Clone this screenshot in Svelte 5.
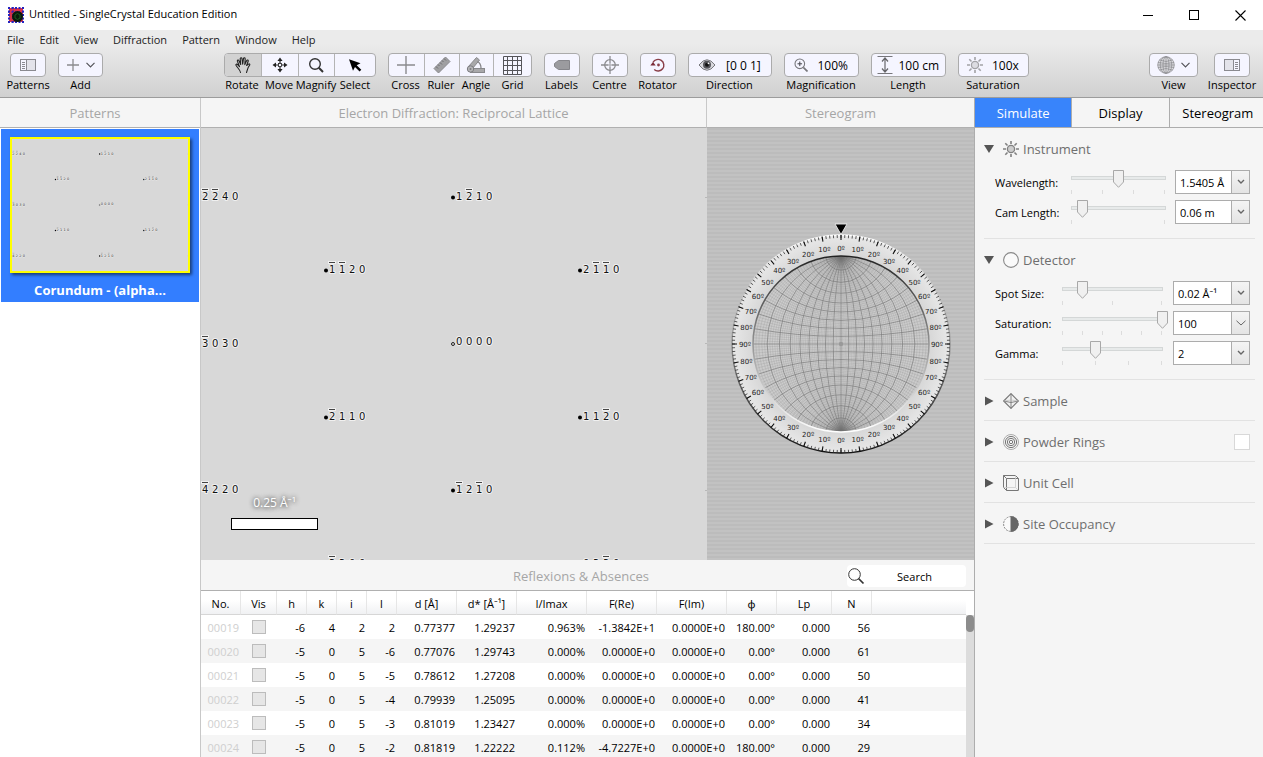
<script>
  const menus = ['File', 'Edit', 'View', 'Diffraction', 'Pattern', 'Window', 'Help'];

  const leftTools = [
    { cells: [{ icon: 'sidebar', label: 'Patterns', w: 36 }] },
    { cells: [{ icon: 'add', label: 'Add', w: 45, menu: true }] }
  ];
  const midTools = [
    {
      cells: [
        { icon: 'hand', label: 'Rotate', w: 37, on: true },
        { icon: 'move', label: 'Move', w: 37 },
        { icon: 'magnify', label: 'Magnify', w: 37 },
        { icon: 'select', label: 'Select', w: 41 }
      ]
    },
    {
      cells: [
        { icon: 'cross', label: 'Cross', w: 36 },
        { icon: 'ruler', label: 'Ruler', w: 35 },
        { icon: 'angle', label: 'Angle', w: 35 },
        { icon: 'grid', label: 'Grid', w: 38 }
      ]
    },
    { cells: [{ icon: 'labels', label: 'Labels', w: 36 }] },
    { cells: [{ icon: 'centre', label: 'Centre', w: 36 }] },
    { cells: [{ icon: 'rotator', label: 'Rotator', w: 36 }] },
    { cells: [{ icon: 'eye', label: 'Direction', w: 84, value: '[0 0 1]' }] },
    { cells: [{ icon: 'zoomin', label: 'Magnification', w: 75, value: '100%' }] },
    { cells: [{ icon: 'length', label: 'Length', w: 75, value: '100 cm' }] },
    { cells: [{ icon: 'sun', label: 'Saturation', w: 71, value: '100x' }] }
  ];
  const rightTools = [
    { cells: [{ icon: 'globe', label: 'View', w: 49, menu: true }] },
    { cells: [{ icon: 'inspector', label: 'Inspector', w: 36 }] }
  ];

  // Reflexions: spot position, text baseline and the four indices.
  const spots = [
    { x: -2, y: 69, b: 72, hkl: [-2, -2, 4, 0], edge: true },
    { x: 252, y: 69, b: 72, hkl: [1, -2, 1, 0] },
    { x: 125, y: 142, b: 145, hkl: [-1, -1, 2, 0] },
    { x: 379, y: 142, b: 145, hkl: [2, -1, -1, 0] },
    { x: -2, y: 216, b: 219, hkl: [-3, 0, 3, 0], edge: true },
    { x: 252, y: 216, b: 217, hkl: [0, 0, 0, 0], open: true },
    { x: 125, y: 289, b: 292, hkl: [-2, 1, 1, 0] },
    { x: 379, y: 289, b: 292, hkl: [1, 1, -2, 0] },
    { x: -2, y: 362, b: 365, hkl: [-4, 2, 2, 0], edge: true },
    { x: 252, y: 362, b: 365, hkl: [-1, 2, -1, 0] },
    { x: 125, y: 436, b: 439, hkl: [-3, 3, 0, 0] },
    { x: 379, y: 436, b: 439, hkl: [0, 3, -3, 0] }
  ];
  const miniSpots = spots.filter((s) => s.y < 400);

  // Wulff net geometry.
  const R = 88;
  const RO = 109;
  const rad = (d) => (d * Math.PI) / 180;
  const f = (n) => n.toFixed(2);
  function net(step, skip) {
    let d = '';
    for (let a = step; a < 90; a += step) {
      if (skip && a % skip === 0) continue;
      const g = f(R / Math.sin(rad(a)));
      d += `M0 ${-R}A${g} ${g} 0 0 1 0 ${R}M0 ${-R}A${g} ${g} 0 0 0 0 ${R}`;
      const r = f(R / Math.tan(rad(a)));
      const x = f(R * Math.cos(rad(a)));
      const y = R * Math.sin(rad(a));
      d += `M-${x} ${f(-y)}A${r} ${r} 0 0 0 ${x} ${f(-y)}M-${x} ${f(y)}A${r} ${r} 0 0 1 ${x} ${f(y)}`;
    }
    return d;
  }
  function ticks(step, len) {
    let d = '';
    for (let a = 0; a < 360; a += step) {
      const c = Math.cos(rad(a));
      const s = Math.sin(rad(a));
      d += `M${f(RO * c)} ${f(RO * s)}L${f((RO - len) * c)} ${f((RO - len) * s)}`;
    }
    return d;
  }
  const fineNet = net(2, 10);
  const coarseNet = net(10, 0) + `M0 ${-R}V${R}M${-R} 0H${R}`;
  const minorTicks = ticks(2, 3);
  const majorTicks = ticks(10, 5);
  const degrees = Array.from({ length: 36 }, (_, i) => {
    const a = i * 10;
    const m = a % 180;
    return { x: 96 * Math.sin(rad(a)), y: -96 * Math.cos(rad(a)) + 3, t: (m > 90 ? 180 - m : m) + 'º' };
  });

  const columns = [
    ['No.', 40], ['Vis', 36], ['h', 30], ['k', 30], ['i', 30], ['l', 30], ['d [Å]', 60], ['d* [Å⁻¹]', 60],
    ['I/Imax', 70], ['F(Re)', 70], ['F(Im)', 70], ['ϕ', 50], ['Lp', 55], ['N', 40]
  ];
  const rows = [
    ['00019', -6, 4, 2, 2, '0.77377', '1.29237', '0.963%', '-1.3842E+1', '0.0000E+0', '180.00°', '0.000', 56],
    ['00020', -5, 0, 5, -6, '0.77076', '1.29743', '0.000%', '0.0000E+0', '0.0000E+0', '0.00°', '0.000', 61],
    ['00021', -5, 0, 5, -5, '0.78612', '1.27208', '0.000%', '0.0000E+0', '0.0000E+0', '0.00°', '0.000', 50],
    ['00022', -5, 0, 5, -4, '0.79939', '1.25095', '0.000%', '0.0000E+0', '0.0000E+0', '0.00°', '0.000', 41],
    ['00023', -5, 0, 5, -3, '0.81019', '1.23427', '0.000%', '0.0000E+0', '0.0000E+0', '0.00°', '0.000', 34],
    ['00024', -5, 0, 5, -2, '0.81819', '1.22222', '0.112%', '-4.7227E+0', '0.0000E+0', '180.00°', '0.000', 29]
  ];

  const sections = [
    {
      icon: 'instrument', title: 'Instrument', kind: 'instrument',
      rows: [
        { id: 'wavelength', label: 'Wavelength:', pos: 50, ticks: 4, value: '1.5405 Å' },
        { id: 'camlength', label: 'Cam Length:', pos: 12, ticks: 2, value: '0.06 m' }
      ]
    },
    {
      icon: 'detector', title: 'Detector', kind: 'detector',
      rows: [
        { id: 'spotsize', label: 'Spot Size:', pos: 20, ticks: 3, value: '0.02 Å⁻¹' },
        { id: 'saturation', label: 'Saturation:', pos: 100, ticks: 6, value: '100', wide: true },
        { id: 'gamma', label: 'Gamma:', pos: 33, ticks: 4, value: '2' }
      ]
    },
    { icon: 'sample', title: 'Sample' },
    { icon: 'rings', title: 'Powder Rings', check: true },
    { icon: 'cell', title: 'Unit Cell' },
    { icon: 'occupancy', title: 'Site Occupancy' }
  ];
  const tabs = ['Simulate', 'Display', 'Stereogram'];
  let tab = $state('Simulate');
</script>

{#snippet icon(name)}
  {#if name === 'sidebar' || name === 'inspector'}
    <svg width="18" height="14" viewBox="0 0 18 14" class:flip={name === 'inspector'}>
      <rect x="1.5" y="1.5" width="15" height="11" fill="none" stroke="#8a8a90" />
      <path d="M7.500 1.500V12.500" stroke="#8a8a90" />
      <path d="M3 4.500H6M3 6.500H6M3 8.500H6M3 10.500H6" stroke="#8a8a90" />
      <rect x="8" y="2" width="8" height="10" fill="#e3e3ea" />
    </svg>
  {:else if name === 'add'}
    <svg width="14" height="14" viewBox="0 0 14 14"><path d="M7 1V13M1 7H13" stroke="#8a8a8e" stroke-width="1.300" /></svg>
  {:else if name === 'hand'}
    <svg width="18" height="18" viewBox="0 0 18 18" fill="none" stroke="#222" stroke-width="1.100" stroke-linecap="round" stroke-linejoin="round">
      <path d="M6.500 16.500C6 13.500 3.500 12 2 9.300C1.500 8.200 2.800 7.700 3.600 8.600L5.500 10.600L3.400 5.200C3 3.900 4.500 3.500 5 4.700L6.700 8.500L6.200 2.800C6.200 1.500 7.800 1.400 8 2.700L8.700 8.200L9.500 2.500C9.800 1.300 11.300 1.500 11.200 2.900L10.800 8.600L12.700 4.600C13.300 3.500 14.600 4.100 14.200 5.300L12.600 9.500L14.500 8.100C15.500 7.500 16.300 8.500 15.500 9.300C13.800 11 13.500 13.500 12.500 16.500" />
    </svg>
  {:else if name === 'move'}
    <svg width="16" height="16" viewBox="0 0 16 16">
      <path d="M8 2V14M2 8H14" stroke="#222" stroke-width="1.200" />
      <path d="M8 .5L10.600 4H5.400ZM8 15.500L5.400 12H10.600ZM.5 8L4 5.400V10.600ZM15.500 8L12 10.600V5.400Z" fill="#222" />
      <rect x="6.500" y="6.500" width="3" height="3" fill="#f5f5ff" stroke="#222" stroke-width=".8" />
    </svg>
  {:else if name === 'magnify'}
    <svg width="16" height="16" viewBox="0 0 16 16" fill="none" stroke="#333"><circle cx="7" cy="7" r="5.300" stroke-width="1.400" /><path d="M10.800 10.800L15 15" stroke-width="2" /></svg>
  {:else if name === 'select'}
    <svg width="16" height="16" viewBox="0 0 16 16"><path d="M2 2.300L13.500 6.300L9.700 8.200L14.300 12.800L12.600 14.500L8 9.900L6 13.700Z" fill="#000" /></svg>
  {:else if name === 'cross'}
    <svg width="20" height="20" viewBox="0 0 20 20"><path d="M10 1V19M1 10H19" stroke="#8a8a8e" stroke-width="1.400" /></svg>
  {:else if name === 'ruler'}
    <svg width="18" height="18" viewBox="0 0 18 18">
      <path d="M12.500 1L17 5.500L5.500 17L1 12.500Z" fill="#a0a0a2" stroke="#88888c" />
      <path d="M3 10.500L5 12.500M5 8.500L6.500 10M7 6.500L9 8.500M9 4.500L10.500 6M11 2.500L13 4.500" stroke="#66666a" stroke-width=".9" />
    </svg>
  {:else if name === 'angle'}
    <svg width="20" height="18" viewBox="0 0 20 18">
      <path d="M2.500 10.500L10.500 1.500L13.500 4L6.500 12.500Z" fill="#a8a8aa" stroke="#88888c" />
      <path d="M11.500 5.500Q15 7.500 15 12" fill="none" stroke="#88888c" stroke-width="1.300" />
      <rect x="4.500" y="12.500" width="14" height="4" fill="#a8a8aa" stroke="#88888c" />
      <circle cx="4.500" cy="13" r="3.200" fill="#b4b4b6" stroke="#7c7c80" /><circle cx="4.500" cy="13" r="1" fill="#7c7c80" />
    </svg>
  {:else if name === 'grid'}
    <svg width="19" height="19" viewBox="0 0 19 19" fill="none" stroke="#55555a"><path d="M.5 .5H18.500V18.500H.5ZM4.500 0V19M9.500 0V19M14.500 0V19M0 4.500H19M0 9.500H19M0 14.500H19" /></svg>
  {:else if name === 'labels'}
    <svg width="18" height="12" viewBox="0 0 18 12"><path d="M5.500 1.500H16.500V10.500H5.500L1.500 7.500V4.500Z" fill="#9b9b9f" stroke="#85858a" stroke-linejoin="round" /></svg>
  {:else if name === 'centre'}
    <svg width="18" height="18" viewBox="0 0 18 18" fill="none" stroke="#8c8c90" stroke-width="1.300"><circle cx="9" cy="9" r="5.300" /><path d="M9 0V7.500M9 10.500V18M0 9H7.500M10.500 9H18" /><circle cx="9" cy="9" r="1" stroke-width=".7" /></svg>
  {:else if name === 'rotator'}
    <svg width="16" height="16" viewBox="0 0 16 16"><path d="M3.800 4.200A5.800 5.800 0 1 1 3.200 11.500" fill="none" stroke="#8a3f48" stroke-width="1.400" transform="rotate(-14 8 8)" /><path d="M.3 8.500H5.700L3 5Z" fill="#7a2c38" /><circle cx="8.500" cy="8" r="1.400" fill="#8a3f48" /></svg>
  {:else if name === 'eye'}
    <svg width="18" height="14" viewBox="0 0 18 14"><path d="M1 7Q9 -3.500 17 7Q9 17.500 1 7Z" fill="#d9d9de" stroke="#77777c" /><circle cx="9" cy="6.800" r="4" fill="#55555a" /><circle cx="9" cy="6.800" r="2" fill="#111" /><circle cx="10.500" cy="5.300" r=".9" fill="#fff" /></svg>
  {:else if name === 'zoomin'}
    <svg width="14" height="14" viewBox="0 0 14 14" fill="none" stroke="#77777c"><circle cx="5.800" cy="5.800" r="4.800" stroke-width="1.100" /><path d="M3.500 5.800H8.100M5.800 3.500V8.100" stroke="#44444a" /><path d="M9.300 9.300L13.500 13.500" stroke-width="1.700" /></svg>
  {:else if name === 'length'}
    <svg width="16" height="18" viewBox="0 0 16 18"><path d="M.5 .5H15.500M.5 17.500H15.500" stroke="#77777c" /><path d="M8 3V15M5 5.500L8 2L11 5.500M5 12.500L8 16L11 12.500" fill="none" stroke="#66666a" stroke-width="1.200" /></svg>
  {:else if name === 'sun' || name === 'instrument'}
    <svg width="16" height="16" viewBox="0 0 16 16" stroke={name === 'sun' ? '#a2a2a6' : '#808080'}>
      <circle cx="8" cy="8" r="3.600" fill={name === 'sun' ? '#dcdce2' : '#ccc'} stroke-width="1.300" />
      <path d="M8 0V3M8 13V16M0 8H3M13 8H16M2.300 2.300L4.500 4.500M11.500 11.500L13.700 13.700M2.300 13.700L4.500 11.500M11.500 4.500L13.700 2.300" stroke-width="1.600" />
    </svg>
  {:else if name === 'globe'}
    <svg width="18" height="18" viewBox="0 0 18 18" fill="none" stroke="#8a8a8e" stroke-width=".7"><circle cx="9" cy="9" r="8.300" fill="#dcdce0" /><path d="M9 .7V17.300M.7 9H17.300" /><ellipse cx="9" cy="9" rx="3" ry="8.300" /><ellipse cx="9" cy="9" rx="5.800" ry="8.300" /><path d="M2.500 4Q9 7 15.500 4M2.500 14Q9 11 15.500 14M1 6.500Q9 8.500 17 6.500M1 11.500Q9 9.500 17 11.500" /></svg>
  {:else if name === 'detector'}
    <svg width="16" height="16" viewBox="0 0 16 16"><circle cx="8" cy="8" r="7.400" fill="#fafafa" stroke="#888" stroke-width="1.100" /></svg>
  {:else if name === 'sample'}
    <svg width="16" height="16" viewBox="0 0 16 16" fill="none" stroke="#777" stroke-linejoin="round"><path d="M8 .7L15.300 8L8 15.300L.7 8Z" fill="#f2f2f2" stroke-width="1.100" /><path d="M8 .7V15.300M.7 8L8 9.500L15.300 8" stroke-width=".9" /><path d="M.7 8L8 7L15.300 8" stroke="#bbb" stroke-width=".7" /></svg>
  {:else if name === 'rings'}
    <svg width="16" height="16" viewBox="0 0 16 16" fill="none" stroke="#777"><circle cx="8" cy="8" r="7.500" stroke="#aaa" /><circle cx="8" cy="8" r="5.600" /><circle cx="8" cy="8" r="3.700" /><circle cx="8" cy="8" r="1.700" /></svg>
  {:else if name === 'cell'}
    <svg width="16" height="16" viewBox="0 0 16 16" fill="none" stroke="#777"><path d="M.5 .5H12.500L15.500 3.500V15.500H3.500L.5 12.500ZM.5 .5L3.500 3.500M3.500 15.500V3.500H15.500" /><path d="M12.500 .5V12.500H.5M12.500 12.500L15.500 15.500" stroke="#ccc" stroke-width=".8" /></svg>
  {:else if name === 'occupancy'}
    <svg width="16" height="16" viewBox="0 0 16 16"><circle cx="8" cy="8" r="7.400" fill="#fafafa" stroke="#888" stroke-dasharray="2 1" /><path d="M7.500 0A8 8 0 0 1 7.500 16Z" fill="#666" /></svg>
  {/if}
{/snippet}

{#snippet tool(group)}
  <div class="tool" style="width:{group.cells.reduce((n, c) => n + c.w, 0)}px">
    <div class="box">
      {#each group.cells as c}
        <button class="cell" class:on={c.on} style="width:{c.w}px" aria-label={c.label}>
          {@render icon(c.icon)}
          {#if c.value}<span class="val">{c.value}</span>{/if}
          {#if c.menu}<svg width="9" height="6" viewBox="0 0 9 6"><path d="M.5 .8L4.500 4.800L8.500 .8" fill="none" stroke="#55555a" stroke-width="1.200" /></svg>{/if}
        </button>
      {/each}
    </div>
    <div class="caps">
      {#each group.cells as c}<span style="width:{c.w}px">{c.label}</span>{/each}
    </div>
  </div>
{/snippet}

{#snippet pattern(list)}
  {#each list as s}
    {#if s.open}
      <circle cx={s.x} cy={s.y} r="1.500" fill="#d8d8d8" stroke="#222" />
    {:else if !s.edge}
      <circle cx={s.x} cy={s.y + 0.5} r="2" fill="#000" />
    {/if}
    {#each s.hkl as n, i}
      <text class="idx" x={s.x + 3 + i * 10} y={s.b}>{Math.abs(n)}</text>
      {#if n < 0}
        <path d="M{s.x + 2 + i * 10} {s.b - 10.5}h8" stroke="#f0f0f0" stroke-width="3" />
        <path d="M{s.x + 3 + i * 10} {s.b - 10.5}h6" stroke="#444" />
      {/if}
    {/each}
  {/each}
  <path d="M504.500 69.500h1M504.500 215.500h1M504.500 362.500h1" stroke="#999" />
{/snippet}

<div class="window">
  <header class="title">
    <svg width="16" height="16" viewBox="0 0 16 16">
      <rect x="1" y="1" width="14" height="14" fill="#d8304a" />
      <path d="M0 1H16M0 15H16M1 0V16M15 0V16" stroke="#2424c0" stroke-width="2" stroke-dasharray="2 1.500" />
      <path d="M0 5H16M5 0V16" stroke="#2424c0" stroke-width="1.500" stroke-dasharray="1.500 2" />
      <circle cx="9.500" cy="9.500" r="5.500" fill="#0b1a0b" />
      <path d="M7 8l2.500-1.500L12 8v3l-2.500 1.500L7 11z" fill="none" stroke="#1d5a1d" />
    </svg>
    <span>Untitled - SingleCrystal Education Edition</span>
    <div class="wincontrols">
      <button aria-label="Minimize"><svg width="11" height="11"><path d="M0 5.500H10" stroke="#000" /></svg></button>
      <button aria-label="Maximize"><svg width="11" height="11"><rect x=".5" y=".5" width="9" height="9" fill="none" stroke="#000" /></svg></button>
      <button aria-label="Close"><svg width="11" height="11"><path d="M.5 .5L10.500 10.500M10.500 .5L.5 10.500" stroke="#000" stroke-width="1.100" /></svg></button>
    </div>
  </header>

  <div class="chrome">
    <nav class="menubar">{#each menus as m}<button>{m}</button>{/each}</nav>
    <div class="toolbar">
      <div class="cluster">{#each leftTools as g}{@render tool(g)}{/each}</div>
      <div class="cluster">{#each midTools as g}{@render tool(g)}{/each}</div>
      <div class="cluster right">{#each rightTools as g}{@render tool(g)}{/each}</div>
    </div>
  </div>

  <div class="body">
    <aside class="patterns">
      <h2>Patterns</h2>
      <button class="thumb">
        <svg class="mini" viewBox="0 0 506 432" preserveAspectRatio="xMidYMid slice">{@render pattern(miniSpots)}</svg>
        <span>Corundum - (alpha...</span>
      </button>
    </aside>

    <main>
      <div class="views">
        <section class="diffraction">
          <h2>Electron Diffraction: Reciprocal Lattice</h2>
          <div class="canvas">
            <svg class="plot">{@render pattern(spots)}</svg>
            <div class="scale"><span>0.25 Å⁻¹</span><i></i></div>
          </div>
        </section>
        <section class="stereo">
          <h2>Stereogram</h2>
          <div class="canvas stripes">
            <svg width="224" height="236" viewBox="-112 -122 224 236">
              <defs>
                <linearGradient id="rim" x1="0" y1="0" x2="0" y2="1"><stop offset="0" stop-color="#fff" /><stop offset=".4" stop-color="#aaa" /><stop offset="1" stop-color="#111" /></linearGradient>
                <linearGradient id="lip" x1="0" y1="0" x2="0" y2="1"><stop offset="0" stop-color="#222" /><stop offset=".6" stop-color="#aaa" /><stop offset="1" stop-color="#fff" /></linearGradient>
                <radialGradient id="ring"><stop offset=".8" stop-color="#d6d6d6" /><stop offset="1" stop-color="#e8e8e8" /></radialGradient>
                <radialGradient id="disc"><stop offset="0" stop-color="#d6d6d6" /><stop offset="1" stop-color="#cacaca" /></radialGradient>
                <radialGradient id="pole"><stop offset="0" stop-color="#666" stop-opacity=".6" /><stop offset="1" stop-color="#888" stop-opacity="0" /></radialGradient>
                <clipPath id="inside"><circle r={R} /></clipPath>
              </defs>
              <circle r={RO} fill="url(#ring)" stroke="url(#rim)" stroke-width="1.400" />
              <path d={minorTicks} stroke="#333" stroke-width=".8" />
              <path d={majorTicks} stroke="#111" stroke-width="1.100" />
              <circle r={R} fill="url(#disc)" />
              <g clip-path="url(#inside)" fill="none">
                <path d={fineNet} stroke="#777" stroke-opacity=".32" stroke-width=".5" />
                <path d={coarseNet} stroke="#777" stroke-opacity=".75" stroke-width=".9" />
                <circle cy={-R} r="15" fill="url(#pole)" />
                <circle cy={R} r="15" fill="url(#pole)" />
              </g>
              <circle r={R} fill="none" stroke="url(#lip)" stroke-width="1.500" />
              <circle r="2.200" fill="#999" />
              {#each degrees as d}<text class="deg" x={d.x} y={d.y}>{d.t}</text>{/each}
              <path d="M-6 -120H6L0 -109.500Z" fill="#000" stroke="#eee" stroke-width=".9" />
            </svg>
          </div>
        </section>
      </div>

      <section class="reflexions">
        <div class="refhead">
          <h3>Reflexions &amp; Absences</h3>
          <label class="search">
            <svg width="18" height="18" viewBox="0 0 18 18" fill="none" stroke="#333"><circle cx="7.500" cy="7.500" r="5.800" /><path d="M11.500 11.500L16.500 16.500" stroke-width="1.700" /></svg>
            <input type="text" placeholder="Search" aria-label="Search" />
          </label>
        </div>
        <div class="tablewrap">
          <table>
            <colgroup>{#each columns as c}<col style="width:{c[1]}px" />{/each}<col /></colgroup>
            <thead><tr>{#each columns as c}<th>{c[0]}</th>{/each}<th class="rest"></th></tr></thead>
            <tbody>
              {#each rows as r}
                <tr>
                  <td class="no">{r[0]}</td>
                  <td class="vis"><input type="checkbox" aria-label="Visible {r[0]}" /></td>
                  {#each r.slice(1) as v}<td>{v}</td>{/each}
                  <td></td>
                </tr>
              {/each}
            </tbody>
          </table>
          <div class="scrollbar"><i></i></div>
        </div>
      </section>
    </main>

    <aside class="inspector">
      <div class="tabs">
        {#each tabs as t}<button class:active={tab === t} onclick={() => (tab = t)}>{t}</button>{/each}
      </div>
      {#each sections as s}
        <section class="group" class:open={s.rows}>
          <header>
            <svg class="tri" width="10" height="10" viewBox="0 0 10 10"><path d={s.rows ? 'M0 1H10L5 9Z' : 'M1 .5L9.500 5L1 9.500Z'} fill="#555" /></svg>
            {@render icon(s.icon)}
            <h4>{s.title}</h4>
            {#if s.check}<input type="checkbox" aria-label={s.title} />{/if}
          </header>
          {#if s.rows}
            {#each s.rows as r}
              <div class="row {s.kind}">
                <label for={r.id}>{r.label}</label>
                <div class="slider">
                  <input id={r.id} type="range" min="0" max="100" value={r.pos} />
                  <div class="marks">{#each Array(r.ticks) as _}<i></i>{/each}</div>
                </div>
                <div class="combo">
                  <select aria-label="{r.label} value"><option>{r.value}</option></select>
                  <svg width="10" height="6" viewBox="0 0 10 6"><path d={r.wide ? 'M.5 .8L5 5L9.500 .8' : 'M2 1L5 4L8 1'} fill="none" stroke="#666" stroke-width={r.wide ? 1 : 1.4} /></svg>
                </div>
              </div>
            {/each}
          {/if}
        </section>
      {/each}
    </aside>
  </div>
</div>

<style>
  :global(body) {
    margin: 0;
    overflow: hidden;
    font-family: "Open Sans", "Noto Sans", sans-serif;
    font-size: 11px;
    color: #000;
  }
  button, input, select { font: inherit; color: inherit; }
  button { border: 0; padding: 0; background: none; }
  svg { display: block; flex: none; }
  .flip { transform: scaleX(-1); }
  h2, h3, h4 { margin: 0; font-weight: 400; font-size: 13px; }

  .window { display: flex; flex-direction: column; height: 100vh; background: #f5f5f5; }
  .title { display: flex; align-items: center; height: 30px; flex: none; padding-left: 8px; gap: 5px; background: #fff; }
  .title > span { line-height: 16px; padding-bottom: 2px; }
  .wincontrols { display: flex; margin-left: auto; }
  .wincontrols button { width: 46px; height: 28px; display: grid; place-items: center; }

  .chrome { flex: none; height: 67px; background: linear-gradient(#ebebeb 20%, #d0d0d0); border-bottom: 1px solid #9c9c9c; }
  .menubar { display: flex; height: 20px; box-sizing: border-box; padding: 0 0 2px 7px; gap: 15px; color: #222; }
  .toolbar { display: flex; justify-content: space-between; padding: 3px 13px 0 10px; }
  .cluster { display: flex; gap: 12px; }
  .cluster.right { gap: 16px; }
  .box { display: flex; height: 24px; box-sizing: border-box; border: 1px solid #ababab; border-radius: 4px; background: #f5f5ff; overflow: hidden; }
  .cell { display: flex; align-items: center; justify-content: space-evenly; box-sizing: border-box; flex: 0 1 auto; min-width: 0; }
  .cell + .cell { border-left: 1px solid #b4b4b4; }
  .cell.on { background: #d2d2d2; }
  .val { font-size: 12px; }
  .tool { display: flex; flex-direction: column; }
  .caps { display: flex; line-height: 16px; }
  .caps span { display: flex; justify-content: center; white-space: nowrap; }

  .body { display: grid; grid-template-columns: 200px minmax(0, 1fr) 289px; flex: 1; min-height: 0; }
  h2 { height: 29px; line-height: 30px; text-align: center; color: #a6a6a6; border-bottom: 1px solid #b0b0b0; }
  .patterns h2 { padding-right: 10px; }
  .patterns { background: #fff; }
  .patterns h2 { background: #f5f5f5; }
  .thumb { display: flex; flex-direction: column; align-items: center; width: 198px; height: 173px; margin: 1px; padding-top: 8px; background: #337eff; color: #fff; font-weight: 700; font-size: 13px; }
  .thumb span { line-height: 34px; }
  .mini { box-sizing: border-box; width: 180px; height: 136px; border: 2px solid #ff0; background: #d8d8d8; box-shadow: 2px 2px 3px #0008; }

  main { display: flex; flex-direction: column; min-width: 0; border-left: 1px solid #c8c8c8; }
  .views { display: flex; height: 462px; flex: none; }
  .views section { display: flex; flex-direction: column; min-width: 0; }
  .diffraction { flex: 506; }
  .stereo { flex: 267; }
  .diffraction h2 { border-right: 1px solid #c8c8c8; }
  .canvas { flex: 1; position: relative; overflow: hidden; background: #d8d8d8; }
  .plot { width: 100%; height: 100%; }
  .idx { font: 10px "DejaVu Sans", sans-serif; fill: #111; stroke: #f0f0f0; stroke-width: 2px; stroke-linejoin: round; paint-order: stroke; }
  .scale { position: absolute; left: 30px; bottom: 30px; width: 87px; text-align: center; color: #fff; text-shadow: 0 0 5px #444, 0 1px 4px #777; font-size: 12px; }
  .scale span { display: block; line-height: 16px; }
  .scale i { display: block; box-sizing: border-box; height: 12px; margin-top: 7px; border: 1px solid #000; background: #fff; }
  .stripes { display: grid; place-items: center; padding-bottom: 8px; background: repeating-linear-gradient(#bcbcbc 0 2px, #c2c2c2 2px 4px); }
  .deg { font: 7px "DejaVu Sans", sans-serif; fill: #222; text-anchor: middle; }

  .reflexions { flex: 1; min-height: 0; display: flex; flex-direction: column; background: #fff; }
  .refhead { display: flex; align-items: center; height: 30px; flex: none; position: relative; justify-content: center; background: #f5f5f5; border-bottom: 1px solid #b0b0b0; }
  .refhead h3 { color: #a6a6a6; padding: 2px 13px 0 0; }
  .search { position: absolute; right: 8px; top: 5px; width: 119px; height: 22px; display: flex; align-items: center; background: #fff; border-radius: 4px; }
  .search input { width: 99px; border: 0; padding: 0; background: none; text-align: center; outline: 0; }
  .search input::placeholder { color: #000; opacity: 1; }
  .tablewrap { flex: 1; min-height: 0; display: flex; overflow: hidden; }
  table { flex: 1; min-width: 0; align-self: flex-start; table-layout: fixed; border-collapse: separate; border-spacing: 0; }
  th { height: 24px; box-sizing: border-box; padding: 2px 0 0; font-weight: 400; background: linear-gradient(#fff 40%, #f0f1f3); border-right: 1px solid #e6e6e6; border-bottom: 1px solid #d6d6d6; }
  .rest { border-right: 0; }
  td { height: 24px; padding: 0 2px 0 0; text-align: right; white-space: nowrap; box-sizing: border-box; }
  tbody tr:nth-child(even) { background: #f5f5f5; }
  .no { color: #cfcfcf; }
  .vis { text-align: center; padding: 0; }
  .vis input { appearance: none; display: block; width: 14px; height: 14px; margin: 0 auto; border: 1px solid #bcbcbc; background: #e6e6e6; }
  .scrollbar { width: 8px; margin-top: 24px; background: #dcdcdc; }
  .scrollbar i { display: block; height: 17px; border-radius: 4px; background: #8c8c8c; }

  .inspector { border-left: 1px solid #adadad; overflow: hidden; background: #f5f5f5; }
  .tabs { display: flex; height: 29px; margin-right: -3px; border-bottom: 1px solid #adadad; font-size: 13px; }
  .tabs button { flex: 1; }
  .tabs button + button { border-left: 1px solid #adadad; }
  .tabs .active { background: #3884fb; color: #fff; }
  .group { margin: 0 8px 0 9px; padding: 2px 0 1px; border-bottom: 1px solid #e2e2e2; }
  .group.open { padding-bottom: 11px; }
  .group header { display: flex; align-items: center; height: 37px; gap: 4px; color: #6e6e6e; }
  .tri { margin-right: 5px; }
  .group header input { appearance: none; width: 16px; height: 16px; margin: 0 5px 0 auto; border: 1px solid #d8d8d8; background: #fff; }
  .row { display: grid; align-items: center; height: 30px; padding: 0 5px 0 11px; }
  .row.instrument { grid-template-columns: 76px 1fr 75px; }
  .row.instrument .slider { margin-right: 10px; }
  .row.detector { grid-template-columns: 67px 1fr 77px; }
  .row.detector .slider { margin-right: 11px; }
  .slider input {
    appearance: none; display: block; width: calc(100% + 11px); height: 18px; margin: 0 -5px 2px -5px;
    background:
      linear-gradient(#e7eaea, #e7eaea) 6px 7px / calc(100% - 12px) 2px no-repeat,
      linear-gradient(#d4d7d7, #d4d7d7) 5px 6px / calc(100% - 10px) 4px no-repeat;
  }
  .slider input::-webkit-slider-thumb {
    appearance: none; width: 11px; height: 18px;
    background: url("data:image/svg+xml,%3Csvg xmlns='http://www.w3.org/2000/svg' width='11' height='18'%3E%3Cpath d='M.5 .5H10.500V12L5.500 17.300L.5 12Z' fill='%23f0f0f0' stroke='%23a8a8a8'/%3E%3C/svg%3E");
  }
  .marks { display: flex; justify-content: space-between; height: 4px; }
  .marks i { width: 1px; background: #dcdcdc; }
  .combo { position: relative; }
  .combo select {
    appearance: none; display: block; width: 100%; height: 24px; box-sizing: border-box; padding: 0 0 0 4px;
    border: 1px solid #acacac; border-radius: 0;
    background: linear-gradient(#acacac, #acacac) right 17px top / 1px 100% no-repeat, linear-gradient(#f4f4f4, #e4e4e4) right / 17px 100% no-repeat, #fff;
  }
  .combo svg { position: absolute; right: 4px; top: 9px; pointer-events: none; }
</style>
